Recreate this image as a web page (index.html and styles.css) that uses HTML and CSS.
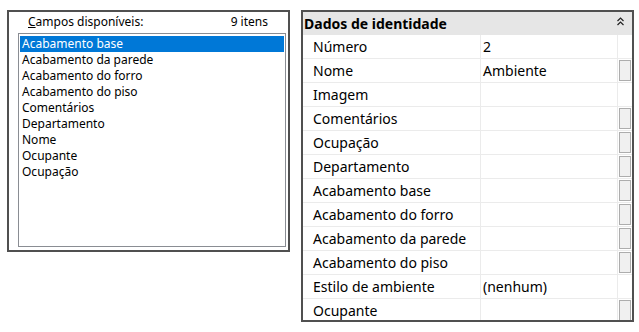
FILE: index.html
```html
<!DOCTYPE html>
<html lang="pt">
<head>
    <meta charset="UTF-8">
    <title>Propriedades do ambiente</title>
    <link rel="stylesheet" href="styles.css">
</head>
<body>
    <div class="page">
        <div class="fields">
            <div class="fields-head">
                <span><u>C</u>ampos disponíveis:</span>
                <span>9 itens</span>
            </div>
            <ul class="list">
                <li class="selected">Acabamento base</li>
                <li>Acabamento da parede</li>
                <li>Acabamento do forro</li>
                <li>Acabamento do piso</li>
                <li>Comentários</li>
                <li>Departamento</li>
                <li>Nome</li>
                <li>Ocupante</li>
                <li>Ocupação</li>
            </ul>
        </div>

        <div class="props">
            <div class="group-head">
                <span>Dados de identidade</span>
                <svg class="collapse" width="7" height="9" viewBox="0 0 7 9">
                    <path d="M0.5 4 L3.5 1 L6.5 4 M0.5 8 L3.5 5 L6.5 8" fill="none" stroke="#222" stroke-width="1.2"/>
                </svg>
            </div>
            <div class="rows">
                <div class="row"><div class="name">Número</div><div class="value">2</div><div class="btn-cell"></div></div>
                <div class="row"><div class="name">Nome</div><div class="value">Ambiente</div><div class="btn-cell"><span class="btn"></span></div></div>
                <div class="row"><div class="name">Imagem</div><div class="value"></div><div class="btn-cell"></div></div>
                <div class="row"><div class="name">Comentários</div><div class="value"></div><div class="btn-cell"><span class="btn"></span></div></div>
                <div class="row"><div class="name">Ocupação</div><div class="value"></div><div class="btn-cell"><span class="btn"></span></div></div>
                <div class="row"><div class="name">Departamento</div><div class="value"></div><div class="btn-cell"><span class="btn"></span></div></div>
                <div class="row"><div class="name">Acabamento base</div><div class="value"></div><div class="btn-cell"><span class="btn"></span></div></div>
                <div class="row"><div class="name">Acabamento do forro</div><div class="value"></div><div class="btn-cell"><span class="btn"></span></div></div>
                <div class="row"><div class="name">Acabamento da parede</div><div class="value"></div><div class="btn-cell"><span class="btn"></span></div></div>
                <div class="row"><div class="name">Acabamento do piso</div><div class="value"></div><div class="btn-cell"><span class="btn"></span></div></div>
                <div class="row"><div class="name">Estilo de ambiente</div><div class="value">(nenhum)</div><div class="btn-cell"></div></div>
                <div class="row"><div class="name">Ocupante</div><div class="value"></div><div class="btn-cell"><span class="btn"></span></div></div>
            </div>
        </div>
    </div>
</body>
</html>
```

FILE: styles.css
```css
body {
    margin: 0;
    background: #ffffff;
    font-family: "Noto Sans", sans-serif;
    color: #000;
}
.page {
    display: flex;
    align-items: flex-start;
    padding: 10px 0 0 7px;
}

/* left: field list */
.fields {
    box-sizing: border-box;
    width: 283px;
    height: 242px;
    border: 2px solid #505050;
    padding: 1px 2px 3px 9px;
    display: flex;
    flex-direction: column;
    font-size: 12px;
    line-height: 16px;
}
.fields-head {
    display: flex;
    justify-content: space-between;
    padding: 0 18px 0 10px;
    height: 20px;
}
.fields-head span {
    padding-top: 1px;
}
.list {
    flex: 1;
    margin: 0;
    padding: 2px 1px;
    list-style: none;
    border: 1px solid #8a8d93;
}
.list li {
    padding-left: 2px;
    height: 16px;
}
.list li.selected {
    background: #0078d7;
    color: #fff;
}

/* right: property grid */
.props {
    box-sizing: border-box;
    width: 333px;
    height: 312px;
    margin-left: 11px;
    border: 2px solid #505050;
    display: flex;
    flex-direction: column;
    font-size: 14px;
    overflow: hidden;
}
.group-head {
    display: flex;
    justify-content: space-between;
    align-items: center;
    height: 23px;
    line-height: 23px;
    background: #e6e6e6;
    font-weight: bold;
    padding: 0 8px 0 1px;
    flex-shrink: 0;
}
.collapse {
    margin-top: -4px;
}
.row {
    display: grid;
    grid-template-columns: 178px 137px 14px;
    height: 24px;
    box-sizing: border-box;
    border-bottom: 1px solid #ebebeb;
    line-height: 23px;
    flex-shrink: 0;
}
.name {
    padding-left: 10px;
    border-right: 1px solid #ebebeb;
    white-space: nowrap;
}
.value {
    padding-left: 2px;
    border-right: 1px solid #ebebeb;
}
.btn-cell {
    padding: 1px 1px 0 1px;
}
.btn {
    display: block;
    box-sizing: border-box;
    width: 12px;
    height: 21px;
    background: #f0f0f0;
    border: 1px solid #adadad;
}
```
